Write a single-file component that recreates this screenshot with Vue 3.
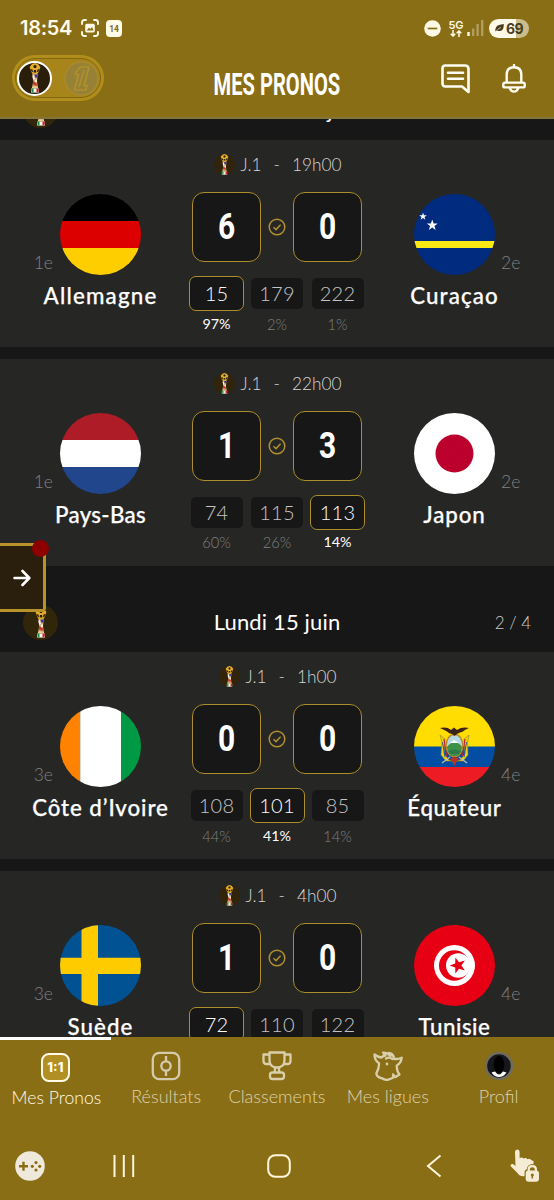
<script setup>
const days = [
  {
    label: 'Dimanche 14 juin', count: '', first: true,
    matches: [
      { time: '19h00', score: [6, 0], odds: [15, 179, 222], pct: ['97%', '2%', '1%'], pick: 0,
        home: { name: 'Allemagne', rank: '1e', flag: 'de', ls: 1.2 }, away: { name: 'Curaçao', rank: '2e', flag: 'cw', ls: 1.1 } },
      { time: '22h00', score: [1, 3], odds: [74, 115, 113], pct: ['60%', '26%', '14%'], pick: 2,
        home: { name: 'Pays-Bas', rank: '1e', flag: 'nl', ls: 0.3 }, away: { name: 'Japon', rank: '2e', flag: 'jp', ls: 0.9 } },
    ],
  },
  {
    label: 'Lundi 15 juin', count: '2 / 4', first: false,
    matches: [
      { time: '1h00', score: [0, 0], odds: [108, 101, 85], pct: ['44%', '41%', '14%'], pick: 1,
        home: { name: 'Côte d’Ivoire', rank: '3e', flag: 'ci', ls: 0.9 }, away: { name: 'Équateur', rank: '4e', flag: 'ec', ls: 0.7 } },
      { time: '4h00', score: [1, 0], odds: [72, 110, 122], pct: ['57%', '29%', '14%'], pick: 0,
        home: { name: 'Suède', rank: '3e', flag: 'se', ls: 1.1 }, away: { name: 'Tunisie', rank: '4e', flag: 'tn', ls: 0.5 } },
    ],
  },
]
</script>

<template>
  <div class="app">
    <svg class="defs" width="0" height="0" aria-hidden="true">
      <symbol id="cup" viewBox="0 0 12 30">
        <path d="M2.3 9 L.6 4 L3 1 L6 0 L9 1 L11.4 4 L9.7 9 L7.6 12 H4.4Z" fill="#e3ad2c" />
        <path d="M4.3 3 L6 1.8 L7.7 3 L7 5 H5Z M1.5 6 L3.5 6.5 L4 9 L2.8 9Z M10.5 6 L8.5 6.5 L8 9 L9.2 9Z M5 7 H7 L7.4 9.4 H4.6Z" fill="#2b210b" />
        <path d="M3.2 11 L8.8 11 L8 18 L8.8 24 H3.2 L4.2 18Z" fill="#d9a77d" />
        <path d="M5.5 11.5 H8.5 V14.5 H6Z" fill="#2d3f96" />
        <path d="M3.4 13 L5 12 L6 16 L4.2 17Z M6 17 L8 16 V19 H6Z" fill="#f5efe2" />
        <path d="M4.2 18 L7.8 20.5 V23 L3.8 21.5Z" fill="#c33a2a" />
        <path d="M3 23.6 H9 V25.4 H3Z" fill="#e8cf8a" />
        <path d="M2.2 25.4 H9.8 V29.6 H2.2Z" fill="#f5f5f0" />
        <path d="M2.2 25.4 H4.5 V29.6 H3Z" fill="#198a45" />
        <path d="M7.5 25.4 H9.8 V28 L8.8 29.6 H7.5Z" fill="#c9262c" />
      </symbol>
      <symbol id="star" viewBox="-10 -10 20 20">
        <path d="M0-10 2.35-3.24 9.5-3.09 3.8 1.24 5.88 8.09 0 4 -5.88 8.09 -3.8 1.24 -9.5-3.09 -2.35-3.24Z" />
      </symbol>
      <symbol id="flag-de" viewBox="0 0 81 81"><path d="M0 0H81V27H0Z" /><path d="M0 27H81V54H0Z" fill="#d00" /><path d="M0 54H81V81H0Z" fill="#ffce00" /></symbol>
      <symbol id="flag-nl" viewBox="0 0 81 81"><path d="M0 0H81V27H0Z" fill="#ae1c28" /><path d="M0 27H81V54H0Z" fill="#fff" /><path d="M0 54H81V81H0Z" fill="#21468b" /></symbol>
      <symbol id="flag-cw" viewBox="0 0 81 81">
        <path d="M0 0H81V81H0Z" fill="#002b7f" /><path d="M0 47H81V54H0Z" fill="#f9e814" />
        <use href="#star" x="5" y="18.5" width="8" height="8" fill="#fff" />
        <use href="#star" x="12.5" y="25.5" width="11.5" height="11.5" fill="#fff" />
      </symbol>
      <symbol id="flag-jp" viewBox="0 0 81 81"><path d="M0 0H81V81H0Z" fill="#fff" /><circle cx="40.5" cy="40.5" r="19" fill="#bc002d" /></symbol>
      <symbol id="flag-ci" viewBox="0 0 81 81"><path d="M0 0H20.2V81H0Z" fill="#ff8200" /><path d="M20.2 0H61V81H20.2Z" fill="#fff" /><path d="M61 0H81V81H61Z" fill="#009a44" /></symbol>
      <symbol id="flag-se" viewBox="0 0 81 81"><path d="M0 0H81V81H0Z" fill="#005293" /><path d="M21.5 0H38V81H21.5Z M0 32.7H81V49H0Z" fill="#fecb00" /></symbol>
      <symbol id="flag-tn" viewBox="0 0 81 81">
        <path d="M0 0H81V81H0Z" fill="#e70013" /><circle cx="40.5" cy="40.5" r="20.5" fill="#fff" />
        <circle cx="40.3" cy="40.5" r="15.3" fill="#e70013" /><circle cx="44.2" cy="40.5" r="12.2" fill="#fff" />
        <g transform="rotate(-90 44 40.5)"><use href="#star" x="35.5" y="32" width="17" height="17" fill="#e70013" /></g>
      </symbol>
      <symbol id="flag-ec" viewBox="0 0 81 81">
        <path d="M0 0H81V41H0Z" fill="#fd0" /><path d="M0 40.5H81V61H0Z" fill="#034ea2" /><path d="M0 61H81V81H0Z" fill="#ed1c24" />
        <path d="M26 29 L31 33 L30 48 L35 54 L40 56 L46 54 L51 48 L50 33 L55 29 L53.5 36 L54 49 L49 55 L42 55 L40.5 58 L38 55 L32 55 L27 49 L28 36Z" fill="#f3d013" stroke="#8d833a" stroke-width=".6" />
        <path d="M28 57 L36 51 M53 57 L45 51" stroke="#b7bcae" stroke-width="1.3" />
        <path d="M30 33 L32.5 50 M51 33 L48.5 50" stroke="#c22" stroke-width="1.2" />
        <path d="M28.5 36 L31 51 M52.5 36 L50 51" stroke="#2458a3" stroke-width="1" />
        <ellipse cx="40.5" cy="39.5" rx="9" ry="12" fill="#b9872b" />
        <ellipse cx="40.5" cy="39.5" rx="7.6" ry="10.6" fill="#b7d9e4" />
        <path d="M33 41 Q37 36 40 37 Q45 36 48 41 Q47.6 47 43.5 50 H37.5 Q33.4 47 33 41Z" fill="#3f9148" />
        <path d="M34.5 45 Q40 42 46.8 45 L45 48 H36Z" fill="#2b7a4a" />
        <path d="M36 37 L40 34 L45 37Z" fill="#fff" />
        <path d="M36 53 L40.5 50.5 L45 53 L42 56 L41 60.5 L39 56Z" fill="#b93320" />
        <path d="M26 22 Q33 20.5 37 24 L40 21.5 L43 24 Q48 20.5 55 22 Q50 24 49 25.5 Q45 26.5 43 28 L40.5 30 L38 28 Q35 27.5 33 25.5 Q31 24 26 22Z" fill="#3c2415" />
      </symbol>
    </svg>

    <header class="top">
      <div class="status">
        <div class="status-side">
          <span class="clock">18:54</span>
          <svg class="ic-shot" width="18" height="18" viewBox="0 0 18 18">
            <path d="M1 5V3.5Q1 1 3.5 1H5 M13 1H14.5Q17 1 17 3.5V5 M17 13V14.5Q17 17 14.5 17H13 M5 17H3.5Q1 17 1 14.5V13" fill="none" stroke="#fffbe8" stroke-width="1.9" stroke-linecap="round" />
            <rect x="4.2" y="4.8" width="9.6" height="8.6" rx="1.6" fill="#fffbe8" />
            <path d="M5.6 11.5 L8 8.8 L9.4 10 L11 8 L12.6 11.5Z" fill="#8a6e15" />
          </svg>
          <span class="cal">14</span>
        </div>
        <div class="status-side">
          <svg width="17" height="17" viewBox="0 0 17 17"><circle cx="8.5" cy="8.5" r="8.3" fill="#fff9e6" /><path d="M3.7 8.5H13.3" stroke="#8a6e15" stroke-width="1.7" /></svg>
          <div class="net">
            <b>5G</b>
            <svg width="12" height="7" viewBox="0 0 12 7"><path d="M3 0V6 M.7 3.7 L3 6 L5.3 3.7 M9 7V1 M6.7 3.3 L9 1 L11.3 3.3" fill="none" stroke="#fffbe8" stroke-width="1.5" /></svg>
          </div>
          <svg class="bars" width="17" height="18" viewBox="0 0 17 18">
            <path d="M1.5 13V17" stroke="#fffbe8" stroke-width="2.4" />
            <path d="M6.2 9.5V17 M10.6 5V17 M15.2 1V17" stroke="#b3a066" stroke-width="2.2" />
          </svg>
          <div class="battery">
            <svg width="9" height="8" viewBox="0 0 9 8"><path d="M.3 7.6 Q0 2 4 1 Q6 .6 8.8 0 Q9 6.5 5 7 Q3 7.2 1.6 6.5Z" fill="#4a3d1c" /><path d="M1.5 6.8 Q4 4 6 3.5" stroke="#fff" stroke-width=".6" fill="none" /></svg>
            <span>69</span>
          </div>
        </div>
      </div>

      <div class="bar">
        <div class="switch">
          <div class="switch-in">
            <span class="knob"><svg width="12" height="30"><use href="#cup" /></svg></span>
            <svg class="off" width="35" height="35" viewBox="0 0 35 35">
              <circle cx="17.5" cy="17.5" r="16.5" fill="#968136" stroke="#a88a31" stroke-width="1.5" />
              <path d="M12 11 L16 6 H25 L20 24.5 H23 L21.7 29 H10.5 L14.5 13.5 H11.5Z" fill="none" stroke="#b1902c" stroke-width="1.7" />
              <path d="M20 9 L15 26" stroke="#b1902c" stroke-width="1.5" />
            </svg>
          </div>
        </div>
        <h1><span>MES PRONOS</span></h1>
        <div class="actions">
          <svg width="30" height="30" viewBox="0 0 30 30" fill="none" stroke="#fffef2" stroke-width="2.6" stroke-linecap="round" stroke-linejoin="round">
            <path d="M4.5 1.5H24Q27.5 1.5 27.5 5V28L21 22.5H4.5Q1.5 22.5 1.5 19.5V4.5Q1.5 1.5 4.5 1.5Z" />
            <path d="M7 8.8H22 M7 14.8H22" />
          </svg>
          <svg width="24" height="29" viewBox="0 0 24 29" fill="none" stroke="#fffef2" stroke-width="2.4" stroke-linecap="round" stroke-linejoin="round">
            <path d="M12 1V3 M4.7 18.5V10.5Q4.7 3.3 12 3.3Q19.3 3.3 19.3 10.5V18.5 M3 18.6H21Q22.7 18.6 22.7 20.3V22Q22.7 23.4 21 23.4H3Q1.3 23.4 1.3 22V20.3Q1.3 18.6 3 18.6Z M7.6 23.8Q9 27.6 12 27.6Q15 27.6 16.4 23.8" />
          </svg>
        </div>
      </div>
    </header>

    <main class="list">
      <section v-for="d in days" :key="d.label" :class="{ lead: d.first }">
        <div class="day">
          <span class="coin"><svg width="12" height="30"><use href="#cup" /></svg></span>
          <span class="day-label">{{ d.label }}</span>
          <span class="count">{{ d.count }}</span>
        </div>
        <article v-for="m in d.matches" :key="m.home.name" class="card">
          <div class="team home">
            <span class="rank">{{ m.home.rank }}</span>
            <svg class="flag" width="81" height="81"><use :href="'#flag-' + m.home.flag" /></svg>
            <span class="name" :style="{ letterSpacing: m.home.ls + 'px' }">{{ m.home.name }}</span>
          </div>
          <div class="mid">
            <div class="meta">
              <span class="mini"><svg width="9" height="21"><use href="#cup" /></svg></span>
              <span>J.1</span><span class="dash">-</span><span>{{ m.time }}</span>
            </div>
            <div class="scores">
              <span class="score"><b>{{ m.score[0] }}</b></span>
              <svg width="18" height="18" viewBox="0 0 18 18" fill="none" stroke="#b09030" stroke-width="1.5"><circle cx="9" cy="9" r="7.8" /><path d="M5.5 9.3 L8 11.6 L12.6 6.7" /></svg>
              <span class="score"><b>{{ m.score[1] }}</b></span>
            </div>
            <div class="odds">
              <div v-for="(o, i) in m.odds" :key="i" class="odd" :class="{ on: m.pick === i }">
                <span class="val">{{ o }}</span>
                <span class="pct">{{ m.pct[i] }}</span>
              </div>
            </div>
          </div>
          <div class="team away">
            <svg class="flag" width="81" height="81"><use :href="'#flag-' + m.away.flag" /></svg>
            <span class="rank">{{ m.away.rank }}</span>
            <span class="name" :style="{ letterSpacing: m.away.ls + 'px' }">{{ m.away.name }}</span>
          </div>
        </article>
      </section>
    </main>

    <nav class="tabs">
      <div class="tab on">
        <span class="one">1:1</span>
        <span class="lbl">Mes Pronos</span>
      </div>
      <div class="tab">
        <svg width="30" height="30" viewBox="0 0 30 30" fill="none" stroke="#d3cbab" stroke-width="2.3"><rect x="1.8" y="1.8" width="26.4" height="26.4" rx="6.5" /><circle cx="15" cy="15" r="4.7" /><path d="M15 5V10.3 M15 19.7V25" /></svg>
        <span class="lbl">Résultats</span>
      </div>
      <div class="tab">
        <svg width="30" height="30" viewBox="0 0 30 30" fill="none" stroke="#d9cfab" stroke-width="2.3" stroke-linejoin="round"><path d="M7.5 1.5H22.5V9Q22.5 16.5 15 16.5Q7.5 16.5 7.5 9Z M7.5 3.5H1.5V10Q1.5 13 4.5 13H8.8 M22.5 3.5H28.5V10Q28.5 13 25.5 13H21.2 M13 16.5L12.8 21.5 M17 16.5L17.2 21.5 M10.5 21.5H19.5Q22 21.5 22 24V25.5Q22 28 19.5 28H10.5Q8 28 8 25.5V24Q8 21.5 10.5 21.5Z" /></svg>
        <span class="lbl">Classements</span>
      </div>
      <div class="tab">
        <svg width="30" height="30" viewBox="0 0 30 30" fill="none" stroke="#d9cfab" stroke-width="2.3" stroke-linejoin="round" stroke-linecap="round"><path d="M8.5 6.5Q4.5 6 1.5 3.5Q1.5 9.5 6 12.3Q6.3 17 3.3 22.5Q4 26.5 9 27.3Q13 30 17 28L20.5 26.5L20 23.5L22.5 26L26.5 23.5Q23.5 20 23.8 14.5Q28 12.5 28.7 6.7Q25 8.5 21 7.8Q21 3 15.5 2L17.5 5Q14.5 1.5 10 1.6L12.5 4.5Q10 4.5 8.5 6.5Z" /><path d="M13 7.5Q16 5.5 19.5 8" /><circle cx="14" cy="13" r=".6" fill="#d9cfab" stroke-width="1.6" /></svg>
        <span class="lbl">Mes ligues</span>
      </div>
      <div class="tab">
        <svg width="30" height="30" viewBox="0 0 30 30"><circle cx="15" cy="15" r="13" fill="#15171b" stroke="#6f6b5d" stroke-width="2.4" /><ellipse cx="15" cy="13.5" rx="5.3" ry="8.5" fill="#020202" /><path d="M7.5 21.5L11 20.5Q15 26.5 19 20.5L22.5 21.5Q19.5 26 15 26Q10.5 26 7.5 21.5Z" fill="#fff" /></svg>
        <span class="lbl">Profil</span>
      </div>
    </nav>

    <footer class="sys">
      <svg class="s1" width="30" height="30" viewBox="0 0 30 30"><circle cx="15" cy="15" r="14.8" fill="#efe9dc" /><path d="M4 15.3H13 M8.5 10.8V19.8" stroke="#8a6e15" stroke-width="2.4" /><g fill="#8a6e15"><circle cx="21" cy="11.6" r="1.6" /><circle cx="21" cy="19" r="1.6" /><circle cx="17.3" cy="15.3" r="1.6" /><circle cx="24.7" cy="15.3" r="1.6" /></g></svg>
      <svg class="s2" width="22" height="22" viewBox="0 0 22 22"><path d="M1.5 0V22 M10.8 0V22 M20.2 0V22" stroke="#fff6dc" stroke-width="2" /></svg>
      <svg class="s3" width="24" height="24" viewBox="0 0 24 24"><rect x="1.2" y="1.2" width="21.6" height="21.6" rx="7" fill="none" stroke="#fff6dc" stroke-width="2" /></svg>
      <svg class="s4" width="16" height="24" viewBox="0 0 16 24"><path d="M14.5 1.5L2 12L14.5 22.5" fill="none" stroke="#fff6dc" stroke-width="2" /></svg>
      <svg class="s5" width="30" height="33" viewBox="0 0 30 33">
        <path d="M5 3Q5 .5 7.3 .5Q9.6 .5 9.6 3V9Q12 7.8 13.5 9.5Q16 8.3 17.5 10.2Q20 9 21.5 11.3L23.5 12V17L17 20L15.500 27Q10 28 7.500 24L.5 17Q.5 14.500 3 15L5.500 17Z" fill="#f6ecd5" />
        <rect x="14.500" y="20" width="15.500" height="13" rx="4" fill="#8a6e15" /><circle cx="22.300" cy="20.500" r="5.500" fill="#8a6e15" />
        <path d="M18.700 23V20.500Q18.700 17.200 22.300 17.200Q25.900 17.200 25.900 20.500V23" fill="none" stroke="#f6ecd5" stroke-width="2.200" />
        <rect x="15.700" y="21.500" width="13.300" height="11.300" rx="3" fill="#f6ecd5" /><circle cx="22.300" cy="26" r="1.500" fill="#8a6e15" /><path d="M22.300 26V29.600" stroke="#8a6e15" stroke-width="1.400" />
      </svg>
    </footer>

    <div class="drawer">
      <svg width="18" height="18" viewBox="0 0 18 18" fill="none" stroke="#fff" stroke-width="2.6" stroke-linecap="round" stroke-linejoin="round"><path d="M1.5 9H16 M9.5 2L16.3 9L9.5 16" /></svg>
      <i class="dot"></i>
    </div>
  </div>
</template>

<style>
body { background: #171717; }
</style>

<style scoped>
.app { position: relative; width: 554px; height: 1200px; display: flex; flex-direction: column; overflow: hidden; background: #171717; color: #fff; font-family: Lato, "Liberation Sans", sans-serif; }
.app svg { display: block; flex: none; }
.app .defs { position: absolute; }

.top { flex: none; box-sizing: border-box; height: 119px; background: #8a6e15; border-bottom: 2px solid #83743a; }
.status { display: flex; justify-content: space-between; align-items: center; height: 28px; padding: 14px 25px 0 20px; }
.status-side { display: flex; align-items: center; height: 28px; }
.clock { font: 600 20px Inter, sans-serif; letter-spacing: -0.3px; color: #fffbe8; }
.ic-shot { margin-left: 9px; }
.cal { box-sizing: border-box; width: 16px; height: 17px; margin-left: 7px; border-radius: 4px; background: #fffbe8; color: #7d6829; font: 700 8.5px/18px Roboto, sans-serif; text-align: center; }
.net { display: flex; flex-direction: column; align-items: center; margin-left: 7px; width: 16px; }
.net b { font: 600 11px/10px Inter, sans-serif; color: #fffbe8; }
.bars { margin-left: 3px; }
.battery { display: flex; align-items: center; justify-content: center; gap: 2px; width: 40px; height: 19px; margin-left: 5px; border-radius: 10px; background: linear-gradient(90deg, #fff9e8 0 27px, #cbbd8b 27px); color: #4a3d1c; font: 700 14px/19px Inter, sans-serif; letter-spacing: -0.5px; }

.bar { display: grid; grid-template-columns: 1fr 130px 1fr; height: 75px; padding: 0 28px 0 12px; }
.switch { box-sizing: border-box; width: 92px; height: 46px; margin-top: 13px; padding: 3px; border-radius: 23px; background: #b18e1c; }
.switch-in { box-sizing: border-box; display: flex; align-items: center; justify-content: space-between; height: 40px; padding: 0 1px; border-radius: 20px; border: 1px solid #82670f; background: #a7851b; }
.knob { display: flex; align-items: center; justify-content: center; box-sizing: border-box; width: 35px; height: 35px; border: 2px solid #fff; border-radius: 50%; background: #2a1d0a; }
h1 { margin: 0; padding: 25px 0 0; font: 700 30.5px/36px Roboto, sans-serif; white-space: nowrap; display: flex; justify-content: center; width: 146px; }
h1 span { display: block; transform: scaleX(0.66); }
.actions { display: flex; justify-content: flex-end; gap: 31px; padding-top: 22px; }

.list { flex: 1; min-height: 0; overflow: hidden; }
.lead { margin-top: -65.2px; }
.day { display: grid; grid-template-columns: 1fr auto 1fr; align-items: center; box-sizing: border-box; height: 86.2px; padding: 27.5px 23px 0; }
.coin { display: flex; align-items: center; justify-content: center; width: 35px; height: 35px; border-radius: 50%; background: #32260a; }
.day-label { font-size: 22px; line-height: 30px; letter-spacing: 0.15px; padding-bottom: 2px; }
.count { justify-self: end; font-weight: 300; font-size: 17px; color: #c8c8c8; }

.card { display: grid; grid-template-columns: 185px 184px 185px; height: 207.2px; margin-bottom: 11.5px; background: #262625; }
section .card:last-child { margin-bottom: 0; }
.team { display: grid; grid-template-rows: 81px 39px; margin-top: 54px; justify-items: center; }
.home { grid-template-columns: 60px 81px 60px; }
.away { grid-template-columns: 81px 59px; margin-left: 45px; }
.flag { border-radius: 50%; }
.rank { align-self: end; font-weight: 300; font-size: 17.5px; line-height: 22px; color: #808080; padding-bottom: 1px; }
.home .rank { justify-self: end; padding-right: 7px; }
.away .rank { justify-self: start; padding-left: 6px; }
.name { font-weight: 500; font-size: 22.3px; line-height: 28px; margin-top: 7px; white-space: nowrap; -webkit-text-stroke: 0.25px #fff; }
.home .name { grid-column: 1 / 4; }
.away .name { grid-column: 1; }

.mid { display: flex; flex-direction: column; align-items: center; }
.meta { display: flex; align-items: center; height: 22px; margin-top: 13.5px; padding-left: 1px; font-weight: 300; font-size: 17.3px; color: #d4d4d4; }
.mini { display: flex; align-items: center; justify-content: center; width: 21px; height: 21px; margin-right: 6px; border-radius: 50%; background: #31240a; }
.dash { margin: 0 12px; }
.scores { display: flex; align-items: center; gap: 7px; margin-top: 16.5px; }
.score { display: flex; align-items: center; justify-content: center; box-sizing: border-box; width: 69px; height: 70px; border: 1.5px solid #ad8c2c; border-radius: 12px; background: #171717; }
.score b { font: 700 36.5px/70px Roboto, sans-serif; transform: scaleX(0.82); }
.odds { display: flex; gap: 6px; margin-top: 14px; }
.odd { display: flex; flex-direction: column; align-items: center; width: 54.5px; }
.val { box-sizing: border-box; width: 52px; height: 31px; margin: 2px 0; border-radius: 5px; background: #171717; font-weight: 300; font-size: 20px; line-height: 31px; letter-spacing: 0.2px; text-align: center; color: #c4c4c4; }
.pct { font-weight: 300; font-size: 14.7px; line-height: 18px; margin-top: 3.5px; color: #808080; }
.on .val { width: 55px; height: 35px; margin: 0; border: 1.5px solid #ad8c2c; border-radius: 7px; line-height: 33px; color: #fff; }
.on .pct { color: #fff; font-weight: 400; font-size: 14.3px; }

.tabs { position: relative; flex: none; display: grid; grid-template-columns: repeat(5, 1fr); height: 94px; background: #8a6e15; }
.tab { display: flex; flex-direction: column; align-items: center; box-sizing: border-box; padding-top: 14px; color: #dcd2ae; }
.tab.on { padding-top: 13px; border-top: 3px solid #fff; color: #fffbe8; }
.one { box-sizing: border-box; width: 29px; height: 29px; border: 2.5px solid #fffbe8; border-radius: 8px; background: #b28f22; font: 800 13px/24px Inter, sans-serif; text-align: center; }
.lbl { font-weight: 300; font-size: 18px; line-height: 22px; margin-top: 4px; white-space: nowrap; }
.on .lbl { margin-top: 5px; padding-left: 2px; font-size: 17.6px; }

.sys { flex: none; display: flex; align-items: center; height: 69px; padding-left: 15px; background: #8a6e15; }
.s2 { margin-left: 68px; }
.s3 { margin-left: 132px; }
.s4 { margin-left: 135px; }
.app .s5 { margin-left: 68px; }

.drawer { position: absolute; left: 0; top: 543px; box-sizing: border-box; display: flex; align-items: center; width: 46px; height: 69px; padding-left: 13px; border: 3px solid #b8932a; border-left: 0; border-radius: 0 4px 4px 0; background: #2a1f0c; }
.dot { position: absolute; right: -6px; top: -6px; width: 17px; height: 17px; border-radius: 50%; background: #8e0000; }
</style>
